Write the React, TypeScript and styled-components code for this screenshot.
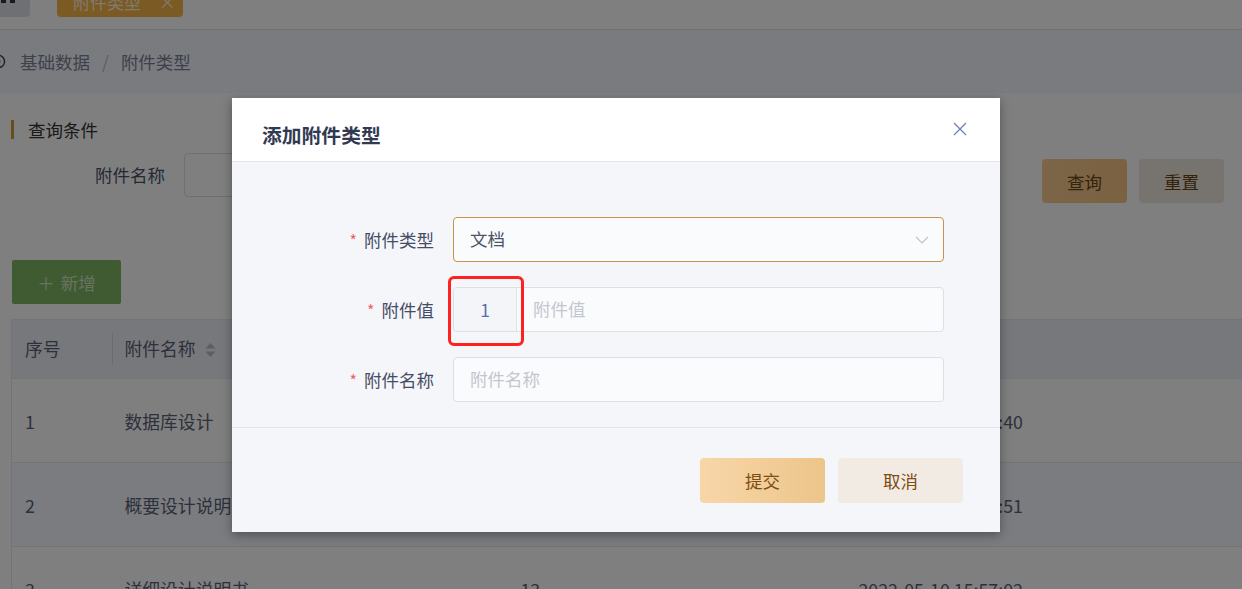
import React from "react";
import styled, { createGlobalStyle } from "styled-components";

const GlobalStyle = createGlobalStyle`
  html, body { margin: 0; padding: 0; }
  body {
    font-family: "Noto Sans CJK SC", "Noto Sans", sans-serif;
    overflow: hidden;
    background: #fff;
  }
  * { box-sizing: border-box; }
`;

const Page = styled.div`
  position: relative;
  width: 1242px;
  height: 589px;
  overflow: hidden;
  background: #fff;
`;

const TabBar = styled.div`
  height: 30px;
  display: flex;
  align-items: flex-end;
  gap: 27px;
  padding-bottom: 12px;
  border-bottom: 1px solid #e0e0e0;
`;

const HomeTab = styled.div`
  width: 40px;
  height: 31px;
  margin-left: -10px;
  border-radius: 4px;
  background: #dfe1e8;
  display: flex;
  align-items: flex-end;
  justify-content: flex-end;
  padding: 0 14px 14px 0;
`;

const ActiveTab = styled.div`
  width: 126px;
  height: 30px;
  border-radius: 4px;
  background: #f8b448;
  color: #fff4e2;
  font-size: 17px;
  line-height: 30px;
  padding-left: 16px;
  display: flex;
  gap: 18px;
  align-items: center;
`;

const Breadcrumb = styled.div`
  height: 63px;
  background: #f5f7fd;
  display: flex;
  align-items: center;
  font-size: 17.5px;
  color: #7a8296;
`;

const CrumbIcon = styled.svg`
  width: 15px;
  height: 15px;
  margin-left: -9px;
  margin-right: 14px;
`;

const CrumbSep = styled.span`
  margin: 0 12px;
  color: #b8bcc6;
`;

const Content = styled.div`
  padding: 0 18px 0 11px;
`;

const SectionTitle = styled.div`
  margin-top: 26px;
  height: 21px;
  display: flex;
  align-items: center;
  gap: 14px;
  font-size: 17.5px;
  color: #333;
  &::before {
    content: "";
    width: 3px;
    height: 19px;
    background: #d6983a;
  }
`;

const QueryRow = styled.div`
  margin-top: 13px;
  display: flex;
  align-items: flex-start;
`;

const QueryLabel = styled.div`
  width: 173px;
  padding-right: 19px;
  text-align: right;
  line-height: 44px;
  font-size: 17.5px;
  color: #4a5266;
`;

const QueryInput = styled.div`
  width: 320px;
  height: 44px;
  border: 1px solid #dcdfe6;
  border-radius: 4px;
  background: #fff;
`;

const Spacer = styled.div`
  flex: 1;
`;

const QueryButtons = styled.div`
  margin-top: 6px;
  display: flex;
  gap: 12px;
`;

const PageButton = styled.div<{ $variant: "primary" | "plain" }>`
  width: 85px;
  height: 44px;
  border-radius: 4px;
  display: flex;
  align-items: center;
  justify-content: center;
  font-size: 17.5px;
  color: #6b4412;
  background: ${(p) =>
    p.$variant === "primary" ? "linear-gradient(90deg, #f9ca90, #f4c384)" : "#eee6de"};
`;

const AddButton = styled.div`
  margin-top: 57px;
  margin-left: 1px;
  width: 109px;
  height: 44px;
  border-radius: 2px;
  background: #80b562;
  color: #cfe6c2;
  font-size: 17.5px;
  display: flex;
  align-items: center;
  justify-content: center;
  gap: 6px;
`;

const Table = styled.table`
  margin-top: 15px;
  width: calc(100% + 160px);
  border-collapse: collapse;
  table-layout: fixed;
  border: 1px solid #e6e8ee;
  font-size: 17.8px;
  color: #5a6278;
  font-variant-numeric: tabular-nums;
`;

const HeadCell = styled.th<{ $divider?: boolean }>`
  height: 59px;
  background: #eef0f9;
  font-weight: normal;
  text-align: left;
  padding: 0 13px 2px;
  position: relative;
  color: #5a6278;
  &::before {
    content: ${(p) => (p.$divider ? '""' : "none")};
    position: absolute;
    left: 0;
    top: 13px;
    height: 32px;
    width: 1px;
    background: #d6d8de;
  }
`;

const Row = styled.tr<{ $striped?: boolean }>`
  height: 84px;
  background: ${(p) => (p.$striped ? "#f6f8fe" : "#fff")};
  border-top: 1px solid #e6e8ee;
`;

const Cell = styled.td`
  padding: 0 13px;
  white-space: nowrap;
  overflow: hidden;
`;

const SortIcon = styled.svg`
  width: 11px;
  height: 14px;
  margin-left: 9px;
  vertical-align: -1px;
`;

/* ---------- modal ---------- */

const Mask = styled.div`
  position: absolute;
  inset: 0;
  background: rgba(0, 0, 0, 0.5);
`;

const Dialog = styled.div`
  position: absolute;
  left: 232px;
  top: 98px;
  width: 768px;
  background: #f5f6fa;
  box-shadow: 0 3px 10px rgba(0, 0, 0, 0.35);
`;

const DialogHeader = styled.div`
  height: 64px;
  background: #fff;
  border-bottom: 1px solid #e2e4ea;
  display: flex;
  align-items: center;
  justify-content: space-between;
  padding: 0 33px 0 30px;
`;

const DialogTitle = styled.div`
  padding-top: 11px;
  font-size: 19.8px;
  line-height: 24px;
  font-weight: 700;
  color: #323a52;
`;

const CloseIcon = styled.svg`
  width: 14px;
  height: 14px;
  margin-top: -1px;
`;

const DialogBody = styled.div`
  padding: 55px 56px 25px 0;
  display: flex;
  flex-direction: column;
  gap: 25px;
  border-bottom: 1px solid #e2e4ea;
`;

const FormItem = styled.div`
  display: grid;
  grid-template-columns: 202px 1fr;
  column-gap: 19px;
  align-items: center;
`;

const Label = styled.label`
  text-align: right;
  font-size: 17.5px;
  color: #454d66;
`;

const Star = styled.span`
  color: #f0625f;
  margin-right: 7px;
  font-size: 16px;
`;

const Field = styled.div<{ $focused?: boolean }>`
  position: relative;
  height: 45px;
  border: 1px solid ${(p) => (p.$focused ? "#c7924b" : "#dcdfe6")};
  border-radius: 4px;
  background: #fafbfd;
  display: flex;
  align-items: center;
  font-size: 17.5px;
  color: #4a5266;
`;

const FieldText = styled.span<{ $placeholder?: boolean }>`
  flex: 1;
  padding: 0 16px 2px;
  color: ${(p) => (p.$placeholder ? "#c3c6cf" : "#4a5266")};
`;

const Prepend = styled.div`
  width: 63px;
  align-self: stretch;
  border-right: 1px solid #dcdfe6;
  background: #f4f5f9;
  display: flex;
  align-items: center;
  justify-content: center;
  color: #5a6cb2;
  border-radius: 4px 0 0 4px;
`;

const Chevron = styled.svg`
  width: 14px;
  height: 8px;
  margin-right: 14px;
`;

const Highlight = styled.div`
  position: absolute;
  left: -6px;
  top: -12px;
  width: 76px;
  height: 70px;
  border: 3px solid #ff2020;
  border-radius: 6px;
  pointer-events: none;
`;

const DialogFooter = styled.div`
  padding: 30px 37px 29px;
  display: flex;
  justify-content: flex-end;
  gap: 13px;
`;

const DialogButton = styled.div<{ $variant: "primary" | "plain" }>`
  width: 125px;
  height: 45px;
  border-radius: 4px;
  display: flex;
  align-items: center;
  justify-content: center;
  font-size: 17.5px;
  color: #7d4c12;
  background: ${(p) =>
    p.$variant === "primary" ? "linear-gradient(90deg, #f8d6a8, #ecc58a)" : "#f2ebe4"};
`;

const rows = [
  { no: 1, name: "数据库设计", value: "11", time: "2022-05-10 15:53:40" },
  { no: 2, name: "概要设计说明书", value: "12", time: "2022-05-10 15:56:51" },
  { no: 3, name: "详细设计说明书", value: "13", time: "2022-05-10 15:57:02" },
];

export default function App() {
  return (
    <Page>
      <GlobalStyle />
      <TabBar>
        <HomeTab>
          <svg width="16" height="16" viewBox="0 0 16 16">
            <path d="M1 7 L8 1 L15 7 V16 H10 V10 H6 V16 H1 Z" fill="#2f3340" />
          </svg>
        </HomeTab>
        <ActiveTab>
          <span>附件类型</span>
          <span>×</span>
        </ActiveTab>
      </TabBar>
      <Breadcrumb>
        <CrumbIcon viewBox="0 0 16 16">
          <circle cx="8" cy="8" r="6.5" fill="none" stroke="#3a3f4c" strokeWidth="1.5" />
          <circle cx="8" cy="8" r="2" fill="#3a3f4c" />
        </CrumbIcon>
        <span>基础数据</span>
        <CrumbSep>/</CrumbSep>
        <span>附件类型</span>
      </Breadcrumb>
      <Content>
        <SectionTitle>查询条件</SectionTitle>
        <QueryRow>
          <QueryLabel>附件名称</QueryLabel>
          <QueryInput />
          <Spacer />
          <QueryButtons>
            <PageButton $variant="primary">查询</PageButton>
            <PageButton $variant="plain">重置</PageButton>
          </QueryButtons>
        </QueryRow>
        <AddButton>
          <span>＋</span>
          <span>新增</span>
        </AddButton>
        <Table>
          <colgroup>
            <col style={{ width: 100 }} />
            <col style={{ width: 396 }} />
            <col style={{ width: 338 }} />
            <col style={{ width: 420 }} />
            <col />
          </colgroup>
          <thead>
            <tr>
              <HeadCell>序号</HeadCell>
              <HeadCell $divider>
                附件名称
                <SortIcon viewBox="0 0 11 14">
                  <path d="M5.5 0 L10.5 5.5 H0.5 Z" fill="#b9bcc4" />
                  <path d="M5.5 14 L10.5 8.5 H0.5 Z" fill="#b9bcc4" />
                </SortIcon>
              </HeadCell>
              <HeadCell $divider>附件值</HeadCell>
              <HeadCell $divider>创建时间</HeadCell>
              <HeadCell />
            </tr>
          </thead>
          <tbody>
            {rows.map((r, i) => (
              <Row key={r.no} $striped={i % 2 === 1}>
                <Cell>{r.no}</Cell>
                <Cell>{r.name}</Cell>
                <Cell>{r.value}</Cell>
                <Cell>{r.time}</Cell>
                <Cell />
              </Row>
            ))}
          </tbody>
        </Table>
      </Content>

      <Mask />
      <Dialog>
        <DialogHeader>
          <DialogTitle>添加附件类型</DialogTitle>
          <CloseIcon viewBox="0 0 14 14">
            <path d="M1 1 L13 13 M13 1 L1 13" stroke="#6f7fbd" strokeWidth="1.3" />
          </CloseIcon>
        </DialogHeader>
        <DialogBody>
          <FormItem>
            <Label>
              <Star>*</Star>附件类型
            </Label>
            <Field $focused>
              <FieldText>文档</FieldText>
              <Chevron viewBox="0 0 14 8">
                <path d="M1 1 L7 7 L13 1" fill="none" stroke="#c0c4cc" strokeWidth="1.2" />
              </Chevron>
            </Field>
          </FormItem>
          <FormItem>
            <Label>
              <Star>*</Star>附件值
            </Label>
            <Field>
              <Prepend>1</Prepend>
              <FieldText $placeholder>附件值</FieldText>
              <Highlight />
            </Field>
          </FormItem>
          <FormItem>
            <Label>
              <Star>*</Star>附件名称
            </Label>
            <Field>
              <FieldText $placeholder>附件名称</FieldText>
            </Field>
          </FormItem>
        </DialogBody>
        <DialogFooter>
          <DialogButton $variant="primary">提交</DialogButton>
          <DialogButton $variant="plain">取消</DialogButton>
        </DialogFooter>
      </Dialog>
    </Page>
  );
}
